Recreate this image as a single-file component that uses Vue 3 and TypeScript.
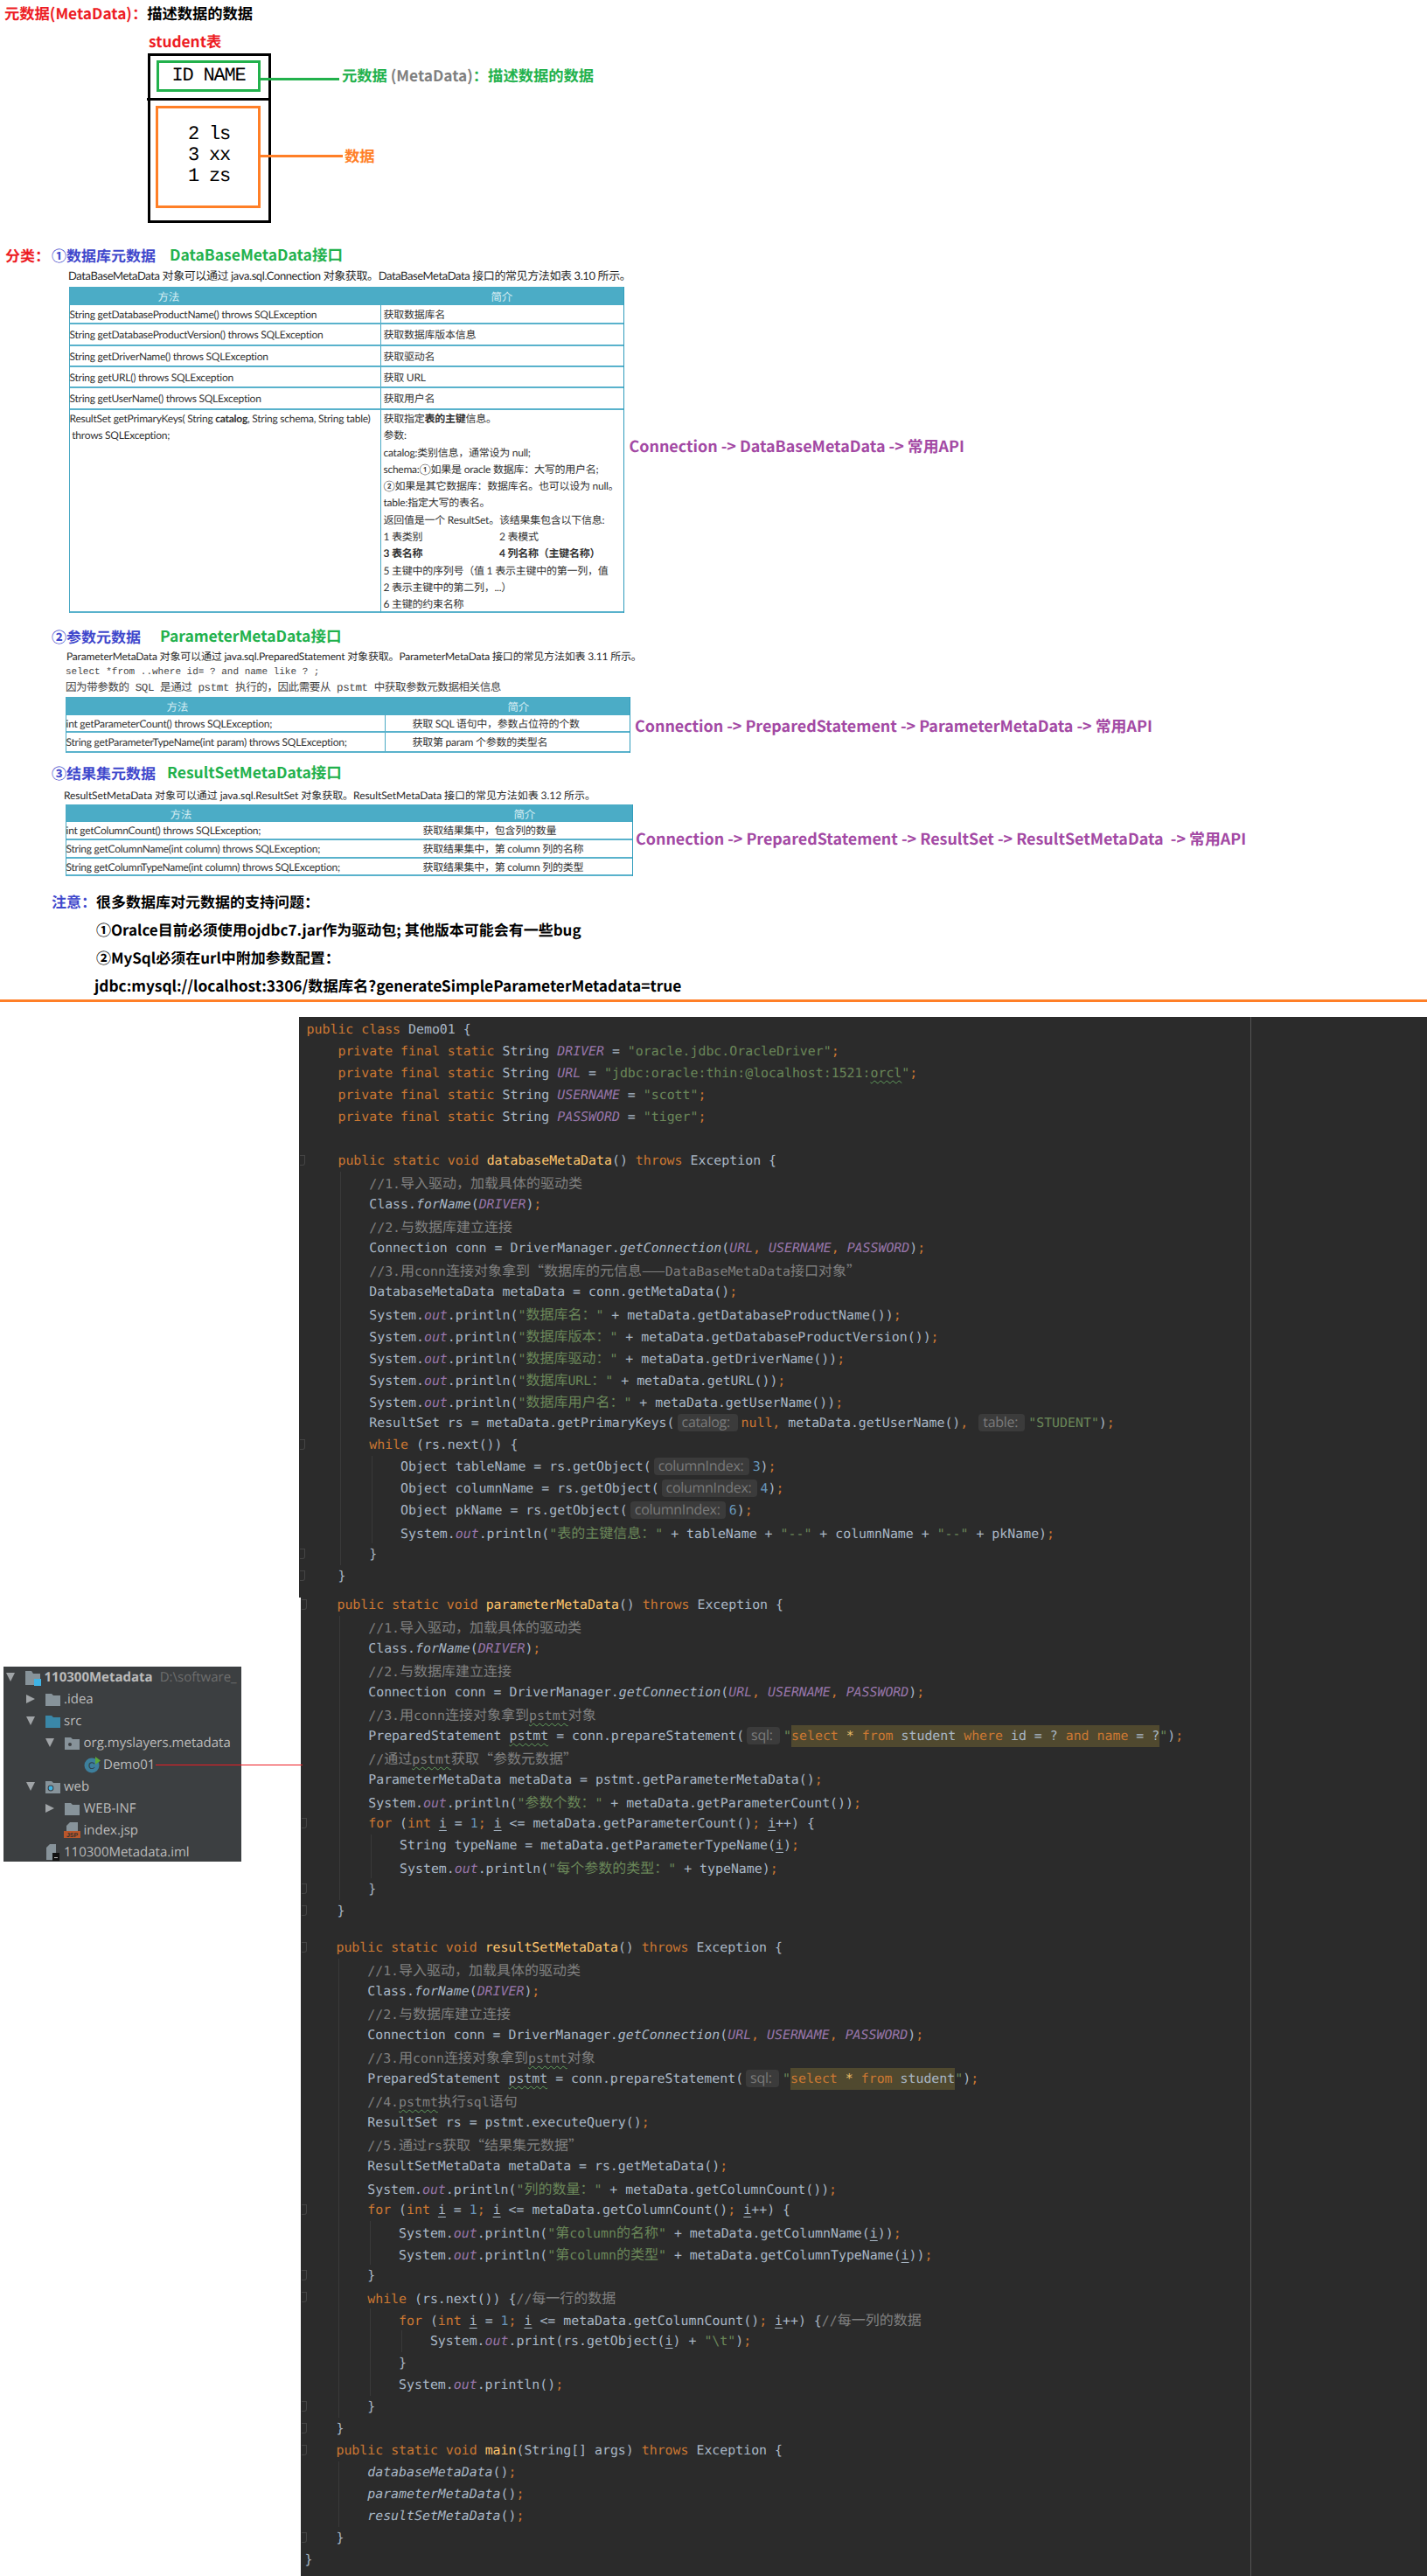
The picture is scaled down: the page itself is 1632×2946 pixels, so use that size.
<script setup lang="ts">
interface Token { t: string; c: string }
interface Line { tokens: Token[]; guides: number[]; fold: boolean }

const CLS: Record<number, string> = {
  1: 'c', 2: 'hint', 3: 'hl', 4: 's', 5: 's', 6: 'it', 7: 'd', 8: 'f', 9: 'k', 10: 'p', 11: 'n', 12: 'u', 13: 'k',
}
const RE = /(\/\/.*$)|(<\w+:>)|(\[\[.*?\]\])|("(?=\[\[)|(?<=\]\])")|("(?:[^"\\]|\\.)*")|(@\w+)|(~\w+~)|((?<=void )\w+)|\b(public|private|final|static|class|void|throws|int|for|while|null)\b|\b(DRIVER|URL|USERNAME|PASSWORD|out)\b|\b(\d+)\b|\b(i)\b|([;,])/g
const SQL = new Set(['select', 'from', 'where', 'and', 'name'])

function leaf(c: string, text: string): Token[] {
  const out: Token[] = []
  for (const part of text.split(/(~[^~]+~)/)) {
    if (!part) continue
    const wave = part.startsWith('~')
    const raw = wave ? part.slice(1, -1) : part
    for (const run of raw.split(/([\u2014\u201C\u201D\u3000-\u9FFF\uFF00-\uFFEF]+)/)) {
      if (!run) continue
      const cjk = /[\u2014\u201C\u201D\u3000-\u9FFF\uFF00-\uFFEF]/.test(run)
      out.push({ t: run, c: [c, wave ? 'wave' : '', cjk ? 'cjk' : ''].join(' ').trim() })
    }
  }
  return out
}

function parse(src: string): Token[] {
  const out: Token[] = []
  let at = 0
  for (const m of src.matchAll(RE)) {
    if (m.index > at) out.push(...leaf('d', src.slice(at, m.index)))
    at = m.index + m[0].length
    const g = Object.keys(CLS).map(Number).find((i) => m[i] !== undefined) as number
    const c = CLS[g]
    if (c === 'hint') {
      const name = m[0].slice(1, -2)
      out.push({ t: name + ':', c: 'hint h-' + name })
    } else if (c === 'hl') {
      for (const w of m[0].slice(2, -2).split(/(\s+)/)) {
        if (w) out.push({ t: w, c: 'hl ' + (SQL.has(w) ? 'k' : w === '*' ? 'star' : 'd') })
      }
    } else if (c === 'it') {
      out.push({ t: m[0].slice(1), c: 'it' })
    } else {
      out.push(...leaf(c, m[0]))
    }
  }
  if (at < src.length) out.push(...leaf('d', src.slice(at)))
  return out
}

function toLines(src: string): Line[] {
  return src.split('\n').map((l) => {
    const indent = l.length - l.trimStart().length
    const lvl = Math.floor(indent / 4)
    const body = l.trim()
    return {
      tokens: parse(l),
      guides: Array.from({ length: Math.max(0, lvl - 1) }, (_, i) => i + 1),
      fold: lvl > 0 && lvl < 3 && (/\{(\/\/.*)?$/.test(body) || body === '}'),
    }
  })
}

const blockA = toLines(String.raw`public class Demo01 {
    private final static String DRIVER = "oracle.jdbc.OracleDriver";
    private final static String URL = "jdbc:oracle:thin:@localhost:1521:~orcl~";
    private final static String USERNAME = "scott";
    private final static String PASSWORD = "tiger";

    public static void databaseMetaData() throws Exception {
        //1.导入驱动，加载具体的驱动类
        Class.@forName(DRIVER);
        //2.与数据库建立连接
        Connection conn = DriverManager.@getConnection(URL, USERNAME, PASSWORD);
        //3.用conn连接对象拿到“数据库的元信息——DataBaseMetaData接口对象”
        DatabaseMetaData metaData = conn.getMetaData();
        System.out.println("数据库名：" + metaData.getDatabaseProductName());
        System.out.println("数据库版本：" + metaData.getDatabaseProductVersion());
        System.out.println("数据库驱动：" + metaData.getDriverName());
        System.out.println("数据库URL：" + metaData.getURL());
        System.out.println("数据库用户名：" + metaData.getUserName());
        ResultSet rs = metaData.getPrimaryKeys(<catalog:>null, metaData.getUserName(), <table:>"STUDENT");
        while (rs.next()) {
            Object tableName = rs.getObject(<columnIndex:>3);
            Object columnName = rs.getObject(<columnIndex:>4);
            Object pkName = rs.getObject(<columnIndex:>6);
            System.out.println("表的主键信息：" + tableName + "--" + columnName + "--" + pkName);
        }
    }`)

const blockB = toLines(String.raw`    public static void parameterMetaData() throws Exception {
        //1.导入驱动，加载具体的驱动类
        Class.@forName(DRIVER);
        //2.与数据库建立连接
        Connection conn = DriverManager.@getConnection(URL, USERNAME, PASSWORD);
        //3.用conn连接对象拿到~pstmt~对象
        PreparedStatement ~pstmt~ = conn.prepareStatement(<sql:>"[[select * from student where id = ? and name = ?]]");
        //通过~pstmt~获取“参数元数据”
        ParameterMetaData metaData = pstmt.getParameterMetaData();
        System.out.println("参数个数：" + metaData.getParameterCount());
        for (int i = 1; i <= metaData.getParameterCount(); i++) {
            String typeName = metaData.getParameterTypeName(i);
            System.out.println("每个参数的类型：" + typeName);
        }
    }`)

const blockC = toLines(String.raw`    public static void resultSetMetaData() throws Exception {
        //1.导入驱动，加载具体的驱动类
        Class.@forName(DRIVER);
        //2.与数据库建立连接
        Connection conn = DriverManager.@getConnection(URL, USERNAME, PASSWORD);
        //3.用conn连接对象拿到~pstmt~对象
        PreparedStatement ~pstmt~ = conn.prepareStatement(<sql:>"[[select * from student]]");
        //4.~pstmt~执行sql语句
        ResultSet rs = pstmt.executeQuery();
        //5.通过rs获取“结果集元数据”
        ResultSetMetaData metaData = rs.getMetaData();
        System.out.println("列的数量：" + metaData.getColumnCount());
        for (int i = 1; i <= metaData.getColumnCount(); i++) {
            System.out.println("第column的名称" + metaData.getColumnName(i));
            System.out.println("第column的类型" + metaData.getColumnTypeName(i));
        }
        while (rs.next()) {//每一行的数据
            for (int i = 1; i <= metaData.getColumnCount(); i++) {//每一列的数据
                System.out.print(rs.getObject(i) + "\t");
            }
            System.out.println();
        }
    }
    public static void main(String[] args) throws Exception {
        @databaseMetaData();
        @parameterMetaData();
        @resultSetMetaData();
    }
}`)

const segments = [
  { cls: 'seg-a', lines: blockA },
  { cls: 'seg-b', lines: blockB },
  { cls: 'seg-c', lines: blockC },
]

const table1 = [
  { h: 22, l: 'String getDatabaseProductName() throws SQLException', r: '获取数据库名' },
  { h: 25, l: 'String getDatabaseProductVersion() throws SQLException', r: '获取数据库版本信息' },
  { h: 24, l: 'String getDriverName() throws SQLException', r: '获取驱动名' },
  { h: 24, l: 'String getURL() throws SQLException', r: '获取 URL' },
  { h: 25, l: 'String getUserName() throws SQLException', r: '获取用户名' },
]
const table2 = [
  { h: 20, l: 'int getParameterCount() throws SQLException;', r: '获取 SQL 语句中，参数占位符的个数' },
  { h: 23, l: 'String getParameterTypeName(int param) throws SQLException;', r: '获取第 param 个参数的类型名' },
]
const table3 = [
  { h: 21, l: 'int getColumnCount() throws SQLException;', r: '获取结果集中，包含列的数量' },
  { h: 21, l: 'String getColumnName(int column) throws SQLException;', r: '获取结果集中，第 column 列的名称' },
  { h: 20, l: 'String getColumnTypeName(int column) throws SQLException;', r: '获取结果集中，第 column 列的类型' },
]

const tree = [
  { lvl: 0, arrow: 'down', icon: 'module', text: '110300Metadata', bold: true, note: 'D:\\software_' },
  { lvl: 1, arrow: 'right', icon: 'folder', text: '.idea' },
  { lvl: 1, arrow: 'down', icon: 'src', text: 'src' },
  { lvl: 2, arrow: 'down', icon: 'pkg', text: 'org.myslayers.metadata' },
  { lvl: 3, arrow: '', icon: 'class', text: 'Demo01' },
  { lvl: 1, arrow: 'down', icon: 'web', text: 'web' },
  { lvl: 2, arrow: 'right', icon: 'folder', text: 'WEB-INF' },
  { lvl: 2, arrow: '', icon: 'jsp', text: 'index.jsp' },
  { lvl: 1, arrow: '', icon: 'iml', text: '110300Metadata.iml' },
]
</script>

<template>
  <div class="page">
    <section class="intro">
      <h1 class="title"><span class="red">元数据(MetaData)：</span>描述数据的数据</h1>
      <div class="student red">student表</div>
      <div class="diagram">
        <div class="outer"></div>
        <div class="split"></div>
        <div class="meta-box"><span class="sim">ID NAME</span></div>
        <div class="data-box">
          <span class="sim">2 ls</span>
          <span class="sim">3 xx</span>
          <span class="sim">1 zs</span>
        </div>
        <div class="wire wire-green"></div>
        <div class="wire wire-orange"></div>
        <div class="note note-green">元数据 <span class="grey">(MetaData)</span>：描述数据的数据</div>
        <div class="note note-orange">数据</div>
      </div>
    </section>

    <section class="kind kind-1">
      <div class="hrow">
        <span class="cat red">分类：</span>
        <span class="blue">①数据库元数据</span>
        <span class="green">DataBaseMetaData接口</span>
      </div>
      <p class="sentence">DataBaseMetaData 对象可以通过 java.sql.Connection 对象获取。DataBaseMetaData 接口的常见方法如表 3.10 所示。</p>
      <div class="trow">
        <div class="table">
          <div class="row head"><span class="m">方法</span><span class="i">简介</span></div>
          <div v-for="r in table1" :key="r.l" class="row" :style="{ height: r.h + 'px' }">
            <span class="m">{{ r.l }}</span><span class="i">{{ r.r }}</span>
          </div>
          <div class="row big">
            <div class="m lines">
              <div>ResultSet getPrimaryKeys( String <b>catalog</b>, String schema, String table)</div>
              <div>&nbsp;throws SQLException;</div>
            </div>
            <div class="i lines">
              <div>获取指定<b>表的主键</b>信息。</div>
              <div>参数:</div>
              <div>catalog:类别信息，通常设为 null;</div>
              <div>schema:①如果是 oracle 数据库：大写的用户名;</div>
              <div>②如果是其它数据库：数据库名。也可以设为 null。</div>
              <div>table:指定大写的表名。</div>
              <div>返回值是一个 ResultSet。该结果集包含以下信息:</div>
              <div class="two"><span>1 表类别</span><span>2 表模式</span></div>
              <div class="two"><b>3 表名称</b><b>4 列名称（主键名称）</b></div>
              <div>5 主键中的序列号（值 1 表示主键中的第一列，值</div>
              <div>2 表示主键中的第二列，...）</div>
              <div>6 主键的约束名称</div>
            </div>
          </div>
        </div>
        <div class="api">Connection -&gt; DataBaseMetaData -&gt; 常用API</div>
      </div>
    </section>

    <section class="kind kind-2">
      <div class="hrow">
        <span class="blue">②参数元数据</span>
        <span class="green">ParameterMetaData接口</span>
      </div>
      <p class="sentence">ParameterMetaData 对象可以通过 java.sql.PreparedStatement 对象获取。ParameterMetaData 接口的常见方法如表 3.11 所示。</p>
      <p class="sentence mono">select *from ..where id= ?  and name like ? ;</p>
      <p class="sentence mono">因为带参数的 SQL  是通过 pstmt 执行的，因此需要从 pstmt 中获取参数元数据相关信息</p>
      <div class="trow">
        <div class="table">
          <div class="row head"><span class="m">方法</span><span class="i">简介</span></div>
          <div v-for="r in table2" :key="r.l" class="row" :style="{ height: r.h + 'px' }">
            <span class="m">{{ r.l }}</span><span class="i">{{ r.r }}</span>
          </div>
        </div>
        <div class="api">Connection -&gt; PreparedStatement -&gt; ParameterMetaData -&gt; 常用API</div>
      </div>
    </section>

    <section class="kind kind-3">
      <div class="hrow">
        <span class="blue">③结果集元数据</span>
        <span class="green">ResultSetMetaData接口</span>
      </div>
      <p class="sentence">ResultSetMetaData 对象可以通过 java.sql.ResultSet 对象获取。ResultSetMetaData 接口的常见方法如表 3.12 所示。</p>
      <div class="trow">
        <div class="table">
          <div class="row head"><span class="m">方法</span><span class="i">简介</span></div>
          <div v-for="r in table3" :key="r.l" class="row" :style="{ height: r.h + 'px' }">
            <span class="m">{{ r.l }}</span><span class="i">{{ r.r }}</span>
          </div>
        </div>
        <div class="api">Connection -&gt; PreparedStatement -&gt; ResultSet -&gt; ResultSetMetaData&nbsp; -&gt; 常用API</div>
      </div>
    </section>

    <section class="notice">
      <div class="nrow"><span class="nlabel blue">注意：</span>很多数据库对元数据的支持问题：</div>
      <div class="nrow">①Oralce目前必须使用ojdbc7.jar作为驱动包; 其他版本可能会有一些bug</div>
      <div class="nrow">②MySql必须在url中附加参数配置：</div>
      <div class="nrow url">jdbc:mysql://localhost:3306/数据库名?generateSimpleParameterMetadata=true</div>
    </section>

    <div class="rule"></div>

    <section class="lower">
      <aside class="side">
        <div class="tree">
          <div v-for="n in tree" :key="n.text" class="node" :style="{ paddingLeft: 3 + n.lvl * 22.5 + 'px' }">
            <span class="arrow" :class="n.arrow"></span>
            <svg class="ico" width="20" height="20" viewBox="0 0 20 20">
              <template v-if="n.icon === 'module'">
                <path d="M1 3h7l2 3h8v13H1z" fill="#87939a" />
                <rect x="11" y="12" width="8" height="8" fill="#3fb3e5" />
              </template>
              <path v-else-if="n.icon === 'folder'" d="M1 4h7l2 2h8v12H1z" fill="#87939a" />
              <path v-else-if="n.icon === 'src'" d="M1 4h7l2 2h8v12H1z" fill="#3a87a8" />
              <template v-else-if="n.icon === 'pkg'">
                <path d="M1 4h7l2 2h8v12H1z" fill="#87939a" />
                <circle cx="7" cy="12" r="2" fill="#3c3f41" />
              </template>
              <template v-else-if="n.icon === 'web'">
                <path d="M1 4h7l2 2h8v12H1z" fill="#87939a" />
                <circle cx="7" cy="12" r="3.4" fill="#3c3f41" />
                <circle cx="7" cy="12" r="2.4" fill="#3fb3e5" />
              </template>
              <template v-else-if="n.icon === 'class'">
                <circle cx="9" cy="11" r="8.5" fill="#3d7f9d" />
                <text x="9" y="15" text-anchor="middle" font-size="11" font-family="Liberation Sans" fill="#2c3c46">C</text>
                <path d="M13 1l6 4.5-6 4.5z" fill="#5aa83a" />
              </template>
              <template v-else-if="n.icon === 'jsp'">
                <path d="M7 1h9v12H3V5z" fill="#87939a" />
                <rect x="0" y="11" width="19" height="8" fill="#b9572b" />
                <text x="9.5" y="18" text-anchor="middle" font-size="7" font-weight="700" font-family="Liberation Sans" fill="#2f2f2f">JSP</text>
              </template>
              <template v-else>
                <path d="M6 1h7v18H2V5z" fill="#87939a" />
                <rect x="9" y="11" width="8" height="9" fill="#111" />
                <rect x="11" y="16" width="4" height="1" fill="#bbb" />
              </template>
            </svg>
            <span class="label" :class="{ strong: n.bold }">{{ n.text }}</span>
            <span v-if="n.note" class="path">{{ n.note }}</span>
          </div>
        </div>
      </aside>
      <div class="editor">
        <div class="shot shot-a">
          <div class="code seg-a">
            <div v-for="(l, i) in segments[0].lines" :key="i" class="line">
              <i v-if="l.fold" class="fold"></i>
              <i v-for="g in l.guides" :key="g" class="guide" :style="{ left: `calc(var(--pad) + ${g * 35.84 + 2.4}px)` }"></i>
              <span v-for="(t, j) in l.tokens" :key="j" :class="t.c">{{ t.t }}</span>
            </div>
          </div>
        </div>
        <div class="shot shot-b">
          <div v-for="s in segments.slice(1)" :key="s.cls" class="code" :class="s.cls">
            <div v-for="(l, i) in s.lines" :key="i" class="line">
              <i v-if="l.fold" class="fold"></i>
              <i v-for="g in l.guides" :key="g" class="guide" :style="{ left: `calc(var(--pad) + ${g * 35.84 + 2.4}px)` }"></i>
              <span v-for="(t, j) in l.tokens" :key="j" :class="t.c">{{ t.t }}</span>
            </div>
          </div>
        </div>
      </div>
      <div class="pointer"></div>
    </section>
  </div>
</template>

<style>
html, body { margin: 0; background: #fff; }
</style>

<style scoped>
.page {
  width: 1632px;
  height: 2946px;
  overflow: hidden;
  background: #fff;
  font-family: "Noto Sans CJK SC", sans-serif;
  color: #000;
  text-rendering: geometricPrecision;
}
.red { color: #ed1c24; }
.blue { color: #3f48cc; }
.green { color: #22b14c; }
.grey { color: #7f7f7f; }

.title {
  margin: 0;
  height: 30px;
  padding-left: 5px;
  font-size: 17.3px;
  line-height: 30px;
  font-weight: 700;
}
.student {
  height: 31px;
  padding-left: 170px;
  font-size: 17.3px;
  line-height: 34px;
  font-weight: 700;
}
.diagram { position: relative; height: 194px; }
.outer { position: absolute; left: 169px; top: 0; width: 141px; height: 194px; box-sizing: border-box; border: 3px solid #000; }
.split { position: absolute; left: 168px; top: 51px; width: 142px; height: 3px; background: #000; }
.meta-box {
  position: absolute; left: 179px; top: 8px; width: 119px; height: 36px;
  box-sizing: border-box; border: 3px solid #22b14c;
  display: flex; align-items: center; justify-content: center;
}
.data-box {
  position: absolute; left: 178px; top: 60px; width: 120px; height: 117px;
  box-sizing: border-box; border: 3px solid #ff7f27; padding-bottom: 3px; padding-left: 2px;
  display: flex; flex-direction: column; align-items: center; justify-content: center;
}
.sim {
  font-family: "Liberation Mono", monospace;
  font-size: 22px;
  letter-spacing: -1.2px;
  line-height: 24px;
  white-space: pre;
}
.wire { position: absolute; height: 3px; }
.wire-green { left: 298px; top: 28px; width: 90px; background: #22b14c; }
.wire-orange { left: 298px; top: 116px; width: 94px; background: #ff7f27; }
.note { position: absolute; font-size: 17.3px; font-weight: 700; line-height: 30px; white-space: nowrap; }
.note-green { left: 391px; top: 10px; color: #22b14c; }
.note-orange { left: 394px; top: 102px; color: #ff7f27; }

.kind-1 { margin-top: 22px; }
.kind-2 { margin-top: 12px; }
.kind-3 { margin-top: 8px; }
.hrow {
  display: flex;
  height: 29px;
  padding-left: 59px;
  font-size: 17px;
  line-height: 30px;
  font-weight: 700;
  white-space: nowrap;
}
.hrow .green { font-size: 17.5px; }
.kind-3 .hrow { height: 30px; }
.cat { margin-left: -53px; width: 53px; }
.kind-1 .blue { width: 135px; }
.kind-2 .blue { width: 124px; }
.kind-3 .blue { width: 132px; }

.sentence {
  margin: 0;
  height: 18px;
  font-family: Lato, "Noto Sans CJK SC", sans-serif;
  font-size: 13px;
  line-height: 18px;
  color: #2a2a2a;
  white-space: pre;
}
.kind-1 .sentence { padding-left: 78px; letter-spacing: -0.4px; }
.kind-2 .sentence { padding-left: 76px; font-size: 12px; letter-spacing: -0.18px; }
.kind-3 .sentence { margin-top: 2px; padding-left: 73px; font-size: 12px; letter-spacing: -0.06px; }
.kind-2 .sentence.mono {
  font-family: "Liberation Mono", "Noto Sans CJK SC", monospace;
  padding-left: 75px;
  font-size: 11px;
  letter-spacing: 0;
  color: #444;
}
.kind-2 .sentence.mono:last-of-type { font-size: 12.5px; letter-spacing: -0.4px; }

.trow { display: flex; align-items: center; }
.kind-1 .trow { margin: 4px 0 0 78.5px; }
.kind-2 .trow { margin: 1px 0 0 74.5px; }
.kind-3 .trow { margin: 1px 0 0 74.5px; }

.table {
  flex: none;
  display: flex;
  flex-direction: column;
  box-sizing: border-box;
  border-left: 1px solid #4aa9c4;
  border-right: 1px solid #2f9cbc;
  font-family: Lato, "Noto Sans CJK SC", sans-serif;
  font-size: 12px;
  letter-spacing: -0.25px;
  color: #333;
  white-space: nowrap;
}
.kind-1 .table { width: 635px; }
.kind-2 .table { width: 646px; }
.kind-3 .table { width: 649px; }
.row {
  display: grid;
  box-sizing: border-box;
  align-items: center;
  border-bottom: 2px solid #59b2cc;
}
.kind-1 .row { grid-template-columns: 355px 1fr; }
.kind-2 .row { grid-template-columns: 364px 1fr; }
.kind-3 .row { grid-template-columns: 408px 1fr; }
.row .m { align-self: stretch; display: flex; align-items: center; }
.row .i { align-self: stretch; display: flex; align-items: center; }
.kind-1 .row .i { padding-left: 3px; border-left: 1px solid #4aa9c4; }
.kind-2 .row .i { padding-left: 31px; border-left: 1px solid #4aa9c4; }
.row.head {
  height: 21px;
  background: #4bacc6;
  border-bottom: none;
  color: #d6edf3;
  font-size: 12.5px;
}
.kind-3 .row.head { height: 20px; }
.row.head .i { border-left: none; }
.kind-1 .row.head .m { padding-left: 101px; }
.kind-1 .row.head .i { padding-left: 127px; }
.kind-2 .row.head .m { padding-left: 115px; }
.kind-2 .row.head .i { padding-left: 141px; }
.kind-3 .row.head .m { padding-left: 119px; }
.kind-3 .row.head .i { padding-left: 104px; }
.row.big { height: 232px; align-items: start; }
.row .lines { display: block; line-height: 19.3px; padding-top: 0; }
.row .lines b { font-weight: 700; }
.two { display: flex; }
.two > :first-child { width: 132.5px; }

.api {
  font-size: 17.9px;
  font-weight: 700;
  color: #a349a4;
  line-height: 30px;
  white-space: nowrap;
}
.kind-1 .api { margin: 0 0 9px 6px; }
.kind-2 .api { margin: 2px 0 0 5.5px; }
.kind-3 .api { margin: 0 0 4px 3.5px; }

.notice { margin-top: 13px; padding-left: 110px; font-size: 17px; font-weight: 700; }
.nrow { position: relative; height: 32px; line-height: 32px; white-space: nowrap; }
.nrow.url { margin-left: -2px; font-size: 17.3px; }
.nlabel { margin-left: -51px; }

.rule { height: 3px; background: #ff7f27; }

.lower { position: relative; display: flex; margin-top: 17px; height: 1783px; }
.side { flex: none; width: 342px; box-sizing: border-box; padding: 743px 0 0 4px; }
.tree {
  width: 272px;
  height: 223px;
  overflow: hidden;
  background: #3c3f41;
  font-family: "Open Sans", sans-serif;
  font-size: 15px;
  color: #bbb;
}
.node { display: flex; align-items: center; height: 25px; box-sizing: border-box; white-space: nowrap; }
.node:first-child { height: 24px; }
.arrow { flex: none; width: 21px; height: 10px; position: relative; }
.arrow.down::before {
  content: ""; position: absolute; left: 0; top: 0;
  border-left: 5px solid transparent; border-right: 5px solid transparent; border-top: 10px solid #a0a4a7;
}
.arrow.right::before {
  content: ""; position: absolute; left: 0; top: 0;
  border-top: 5px solid transparent; border-bottom: 5px solid transparent; border-left: 10px solid #a0a4a7;
}
.ico { flex: none; margin-right: 2.5px; }
.label.strong { font-weight: 700; }
.path { margin-left: 8px; color: #6e6e6e; }

.editor { flex: 1; min-width: 0; display: flex; flex-direction: column; }
.shot { position: relative; background: #2b2b2b; overflow: hidden; }
.shot::after {
  content: ""; position: absolute; top: 0; bottom: 0; right: 201px; width: 1px; background: #555;
}
.shot-a { height: 664px; flex: none; }
.shot-b { flex: 1; margin-left: 2px; }
.code {
  font-family: "DejaVu Sans Mono", "Noto Sans CJK SC", monospace;
  font-size: 14.88px;
  color: #a9b7c6;
}
.seg-a { --pad: 8.6px; padding-top: 2px; }
.seg-b { --pad: 5.6px; margin-top: -4px; }
.seg-c { --pad: 4.6px; margin-top: 17px; }
.line {
  position: relative;
  height: 25px;
  line-height: 25px;
  white-space: pre;
  padding-left: var(--pad);
}
.guide { position: absolute; top: 0; bottom: 0; width: 1px; background: #393939; }
.fold {
  position: absolute; left: 1px; top: 6px; width: 5px; height: 10px;
  border: 1px solid #444; border-left: none; border-radius: 0 0 3px 0;
}
.cjk { font-family: "Noto Sans CJK SC", sans-serif; font-size: 16px; font-weight: 400; }
.k { color: #cc7832; }
.s { color: #6a8759; }
.c { color: #808080; }
.d { color: #a9b7c6; }
.f { color: #ffc66d; }
.n { color: #6897bb; }
.p { color: #9876aa; font-style: italic; }
.it { color: #a9b7c6; font-style: italic; }
.u { color: #a9b7c6; text-decoration: underline; text-underline-offset: 3px; }
.wave { text-decoration: underline wavy #619e5c 1px; text-underline-offset: 3px; }
.hl { display: inline-block; height: 25px; background: #50492f; vertical-align: top; }
.star { color: #e8bf6a; }
.hint {
  display: inline-block;
  box-sizing: border-box;
  height: 20px;
  margin: 2px 4px 0 3px;
  padding-left: 5px;
  border-radius: 4px;
  background: #3b3b3b;
  color: #7a7a7a;
  font-family: "Open Sans", sans-serif;
  font-size: 16px;
  letter-spacing: -0.3px;
  line-height: 19px;
  vertical-align: top;
}
.h-catalog { width: 69px; }
.h-table { width: 53px; }
.h-columnIndex { width: 109px; }
.h-sql { width: 38px; }

.pointer { position: absolute; left: 178px; top: 855px; width: 168px; height: 1px; background: #ed1c24; }
</style>
